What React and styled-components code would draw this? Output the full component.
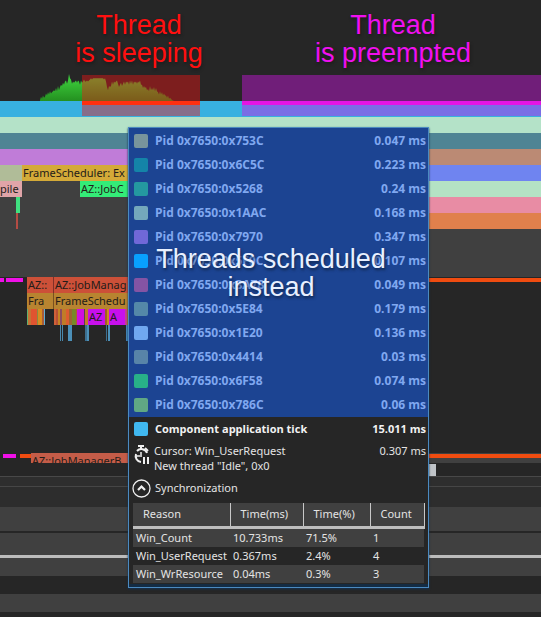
import React from "react";
import styled, { createGlobalStyle } from "styled-components";

const GlobalStyle = createGlobalStyle`
  * { box-sizing: border-box; }
  body { margin: 0; background: #262626; }
`;

const Page = styled.main`
  position: relative;
  min-height: 100vh;
  overflow: hidden;
  background: #262626;
  font: 11px/16px "Noto Sans", "Open Sans", sans-serif;
`;

const Overview = styled.header`
  display: flex;
  align-items: flex-end;
  height: 101px;
  padding-left: 40px;
`;

const Lane = styled.div`
  display: flex;
  height: ${(p) => p.$height || 16}px;
  background: ${(p) => p.$color || "transparent"};
`;

const Segment = styled.div`
  flex: ${(p) => (p.$width ? `0 0 ${p.$width}px` : "1 1 0")};
  min-width: 0;
  padding-left: ${(p) => p.$pad || 0}px;
  background: ${(p) => p.$color || "transparent"};
  color: #241c18;
  white-space: nowrap;
  overflow: hidden;
`;

const Range = styled.div`
  position: absolute;
  top: 75px;
  left: ${(p) => p.$left}px;
  ${(p) => (p.$width ? `width: ${p.$width}px;` : "right: 0;")}
  height: 41px;
  padding-top: 26px;
  background: ${(p) => p.$tint};
  &::before {
    content: "";
    display: block;
    height: 4px;
    background: ${(p) => p.$line};
  }
`;

const Caption = styled.h2`
  position: absolute;
  top: ${(p) => p.$top}px;
  left: ${(p) => p.$left}px;
  width: ${(p) => p.$width}px;
  margin: 0;
  color: ${(p) => p.$color};
  font: 27px/28px "Liberation Sans", Arial, sans-serif;
  text-align: center;
  white-space: pre-line;
  text-shadow: 1px 2px 3px ${(p) => p.$shadow || "#1c1c1c"};
`;

const Tooltip = styled.section`
  position: absolute;
  top: 127px;
  left: 128px;
  width: 301px;
  padding: 0 0 4px;
  border: 1px solid #4b8ac0;
  background: #262626;
  color: #e4e4e4;
  box-shadow: inset 0 -3px 0 #142c44, 0 1px 2px #123050;
`;

const ThreadList = styled.ul`
  margin: 0;
  padding: 1px 0 0;
  list-style: none;
  background: #1c4492;
  color: #80a8f0;
  font-size: 12px;
`;

const ThreadRow = styled.li`
  display: flex;
  align-items: center;
  gap: 7px;
  height: 24px;
  padding: 0 2px 0 5px;
  font-family: "Open Sans", "Noto Sans", sans-serif;
  font-weight: 700;
`;

const TickRow = styled(ThreadRow).attrs({ as: "div" })`
  color: #f2f2f2;
`;

const Swatch = styled.span`
  width: 14px;
  height: 14px;
  border-radius: 2px;
  background: ${(p) => p.$color};
`;

const Value = styled.span`
  margin-left: auto;
`;

const CursorRow = styled.div`
  display: flex;
  align-items: flex-start;
  gap: 4px;
  height: 34px;
  padding: 2px 2px 0 4px;
  line-height: 15px;
`;

const CursorText = styled.p`
  margin: 0;
  white-space: pre-line;
`;

const SyncButton = styled.button`
  display: flex;
  align-items: center;
  gap: 4px;
  height: 26px;
  margin-bottom: 2px;
  padding: 0 3px;
  border: 0;
  background: none;
  color: inherit;
  font: inherit;
`;

const WaitTable = styled.table`
  width: 291px;
  margin-left: 4px;
  border-collapse: collapse;
  table-layout: fixed;
  th {
    height: 24px;
    padding: 0;
    border-right: 1px solid #c8c8c8;
    background: #404040;
    font-weight: 400;
    padding-left: 10px;
    text-align: left;
  }
  td {
    height: 18px;
    padding: 0 0 0 3px;
    line-height: 18px;
    white-space: nowrap;
  }
  thead { border-bottom: 3px solid #bebebe; }
  tbody tr:nth-child(odd) { background: #404040; }
`;

const Column = styled.col`
  width: ${(p) => p.$width}px;
`;

const ScrollThumb = styled.div`
  width: 7px;
  height: 12px;
  margin: 1px 0 0 429px;
  background: #c0c4c8;
`;

const threads = [
  ["753C", "0.047", "#78949c"],
  ["6C5C", "0.223", "#1484a8"],
  ["5268", "0.24", "#2498a0"],
  ["1AAC", "0.168", "#74a8bc"],
  ["7970", "0.347", "#7068d8"],
  ["5F0C", "0.107", "#08a0ff"],
  ["3A78", "0.049", "#8454a4"],
  ["5E84", "0.179", "#5488a8"],
  ["1E20", "0.136", "#70a8f0"],
  ["4414", "0.03", "#5884a8"],
  ["6F58", "0.074", "#28b088"],
  ["786C", "0.06", "#60a884"],
];

const waits = [
  ["Win_Count", "10.733ms", "71.5%", "1"],
  ["Win_UserRequest", "0.367ms", "2.4%", "4"],
  ["Win_WrResource", "0.04ms", "0.3%", "3"],
];

const jobs = [
  [27], [1, "#60b070"], [3, "#c47434"], [6, "#e05430"], [1, "#8a8a40"], [4, "#d88c20"], [2, "#a85c38"], [1, "#60acd4"],
  [9], [2, "#d06038"], [2, "#b85034"], [2, "#c48424"], [2, "#8c4c60"], [4, "#c07c28"], [3, "#dc5c30"], [3, "#9c6430"], [4, "#788828"], [1, "#b06030"],
  [7, "#d010e0"], [1, "#584050"], [3, "#c07c28"], [17, "#c810ec", "AZ"], [2, "#a06020"], [2, "#cc8c20"], [16, "#c810ec", "A"], [2, "#c84090"], [2, "#c07c28"],
];

const waitsBelow = [
  [60], [1, "#4a88ac"], [1], [1, "#4a88ac"], [5], [4, "#4c90b8"], [13], [2, "#3d7090"], [2, "#4c90b8"], [17], [1, "#3d7090"], [1], [2, "#4c90b8"], [16], [2, "#4488bc"],
];

const heights = [
  1, 4, 2, 5, 3, 4, 7, 5, 8, 6, 9, 7, 8, 9, 10, 9, 12, 9, 14, 10, 13, 15, 14, 17, 15, 18, 19, 16, 19, 25, 21, 20, 16, 18, 17, 18, 19, 17, 19, 18, 15, 19, 17, 18, 20, 18,
  18, 19, 18, 19, 20, 21, 20, 21, 21, 21, 21, 21, 21, 21, 21, 21, 21, 21, 20, 21, 18, 13, 10, 14, 13, 14, 18, 15, 18, 17, 18, 19, 16, 13, 15, 17, 14, 16, 18, 15,
  18, 17, 18, 15, 19, 16, 19, 15, 18, 17, 18, 16, 18, 17, 19, 15, 15, 12, 14, 12, 13, 10, 11, 9, 14, 10, 12, 10, 13, 9, 12, 9, 8, 6, 9, 6, 8, 5, 7, 5, 5, 3, 5, 2, 3, 2, 1,
];

function Histogram() {
  const points = heights.map((h, i) => `${i},${26 - h * 1.08}`).join(" ");
  return (
    <svg width="134" height="28" viewBox="0 -2 134 28" aria-hidden="true">
      <defs>
        <linearGradient id="load" x1="0" y1="0" x2="0" y2="1">
          <stop offset="0" stopColor="#40d840" />
          <stop offset="1" stopColor="#249020" />
        </linearGradient>
      </defs>
      <polygon points={`0,26 ${points} 134,26`} fill="url(#load)" />
    </svg>
  );
}

function TimerIcon() {
  return (
    <svg width="17" height="22" viewBox="0 0 17 22" fill="none" stroke="#f0f0f0" strokeWidth="2" aria-hidden="true">
      <path d="M5 3h6M8 3v3M12 5l3 3" />
      <path d="M14 10a6 6 0 0 0-10-2M3 11a6 6 0 0 0 5 8" />
      <path d="M8 9v5M2 13h5" strokeWidth="1.5" />
      <path d="M11 14v7M15 14v7" />
    </svg>
  );
}

function ChevronIcon() {
  return (
    <svg width="19" height="19" viewBox="0 0 19 19" fill="none" stroke="#f0f0f0" aria-hidden="true">
      <circle cx="9.5" cy="9.5" r="8.5" strokeWidth="1.3" />
      <path d="M6 11l3.5-3.5L13 11" strokeWidth="2.2" />
    </svg>
  );
}

function Segments({ items }) {
  return items.map(([width, color, label], i) => (
    <Segment key={i} $width={width} $color={color} $pad={label ? 1 : 0}>{label}</Segment>
  ));
}

function Timeline() {
  return (
    <>
      <Lane $color="#38b0e0" />
      <Lane $color="#b4e2c8" />
      <Lane $color="#4f8494" />
      <Lane>
        <Segment $width={300} $color="#c07cd8" />
        <Segment $color="#bb8a74" />
      </Lane>
      <Lane>
        <Segment $width={22} $color="#b0bc98" />
        <Segment $width={278} $color="#d4aa38" $pad={1}>FrameScheduler: Ex</Segment>
        <Segment $color="#6f84f0" />
      </Lane>
      <Lane $color="#404040">
        <Segment $width={22} $color="#e0a4a8">pile</Segment>
        <Segment $width={58} />
        <Segment $width={220} $color="#34ec78" $pad={1}>AZ::JobC</Segment>
        <Segment $color="#b4e2c4" />
      </Lane>
      <Lane $color="#404040">
        <Segment $width={16} />
        <Segment $width={4} $color="#40e080" />
        <Segment $width={280} />
        <Segment $color="#e88ca4" />
      </Lane>
      <Lane $color="#404040">
        <Segment $width={16} />
        <Segment $width={2} $color="#b44c44" />
        <Segment $width={282} />
        <Segment $color="#e0804c" />
      </Lane>
      <Lane $color="#404040" $height={48} />
      <ThreadTrack />
      <Lane><Segments items={[[27], [26, "#b88430", "Fra"], [1, "#785020"], [200, "#b88430", "FrameSchedu"]]} /></Lane>
      <Lane><Segments items={jobs} /></Lane>
      <Lane><Segments items={waitsBelow} /></Lane>
      <Lane $height={112} />
      <LowerTrack />
    </>
  );
}

const Strip = styled.div`
  height: 4px;
  margin-top: 1px;
  background: ${(p) => p.$color};
`;

function ThreadTrack() {
  return (
    <Lane>
      <Segment $width={4}><Strip $color="#f010e8" /></Segment>
      <Segment $width={2} />
      <Segment $width={17}><Strip $color="#f010e8" /></Segment>
      <Segment $width={4} />
      <Segment $width={26} $color="#cc5038" $pad={1}>AZ::</Segment>
      <Segment $width={1} $color="#803028" />
      <Segment $width={246} $color="#cc5038" $pad={1}>AZ::JobManag</Segment>
      <Segment><Strip $color="#f04c10" /></Segment>
    </Lane>
  );
}

const LowerLane = styled(Lane)`
  overflow: hidden;
`;

function LowerTrack() {
  return (
    <LowerLane $height={10}>
      <Segment $width={3} />
      <Segment $width={13}><Strip $color="#f010e8" /></Segment>
      <Segment $width={4} />
      <Segment $width={11}><Strip $color="#f04c10" /></Segment>
      <Segment $width={269} $color="#c45c48" $pad={1}>AZ::JobManagerB</Segment>
      <Segment $color="#404040"><Strip $color="#f04c10" /></Segment>
    </LowerLane>
  );
}

export default function App() {
  return (
    <Page>
      <GlobalStyle />
      <Overview><Histogram /></Overview>
      <Timeline />
      <Lane $height={13}><ScrollThumb /></Lane>
      <Lane $height={1} $color="#484848" />
      <Lane $height={9} $color="#2e2e2e" />
      <Lane $height={1} $color="#464646" />
      <Lane $height={20} $color="#2d2d2d" />
      <Lane $height={24} $color="#404040" />
      <Lane $height={2} $color="#262626" />
      <Lane $height={22} $color="#404040" />
      <Lane $height={3} $color="#bcbcbc" />
      <Lane $height={18} $color="#404040" />
      <Lane $height={18} />
      <Lane $height={18} $color="#404040" />
      <Lane $height={5} />

      <Range $left={82} $width={118} $tint="rgba(245, 19, 19, 0.42)" $line="#ff3010" />
      <Range $left={242} $tint="rgba(214, 19, 235, 0.42)" $line="#e414e4" />
      <Caption $top={11} $left={40} $width={198} $color="#ff1010">{"Thread\nis sleeping"}</Caption>
      <Caption $top={11} $left={292} $width={202} $color="#f010f0">{"Thread\nis preempted"}</Caption>

      <Tooltip>
        <ThreadList>
          {threads.map(([id, time, color]) => (
            <ThreadRow key={id}>
              <Swatch $color={color} />
              <span>Pid 0x7650:0x{id}</span>
              <Value>{time} ms</Value>
            </ThreadRow>
          ))}
        </ThreadList>
        <TickRow>
          <Swatch $color="#40b8f0" />
          <span>Component application tick</span>
          <Value>15.011 ms</Value>
        </TickRow>
        <CursorRow>
          <TimerIcon />
          <CursorText>{"Cursor: Win_UserRequest\nNew thread \"Idle\", 0x0"}</CursorText>
          <Value>0.307 ms</Value>
        </CursorRow>
        <SyncButton type="button" aria-expanded="true">
          <ChevronIcon />
          Synchronization
        </SyncButton>
        <WaitTable>
          <colgroup>
            <Column $width={97} />
            <Column $width={73} />
            <Column $width={67} />
            <Column $width={54} />
          </colgroup>
          <thead>
            <tr>
              <th scope="col">Reason</th>
              <th scope="col">Time(ms)</th>
              <th scope="col">Time(%)</th>
              <th scope="col">Count</th>
            </tr>
          </thead>
          <tbody>
            {waits.map((row) => (
              <tr key={row[0]}>
                {row.map((cell, i) => <td key={i}>{cell}</td>)}
              </tr>
            ))}
          </tbody>
        </WaitTable>
      </Tooltip>
      <Caption $top={245} $left={128} $width={286} $color="#e8f0ff" $shadow="#10264c">{"Threads scheduled\ninstead"}</Caption>
    </Page>
  );
}
